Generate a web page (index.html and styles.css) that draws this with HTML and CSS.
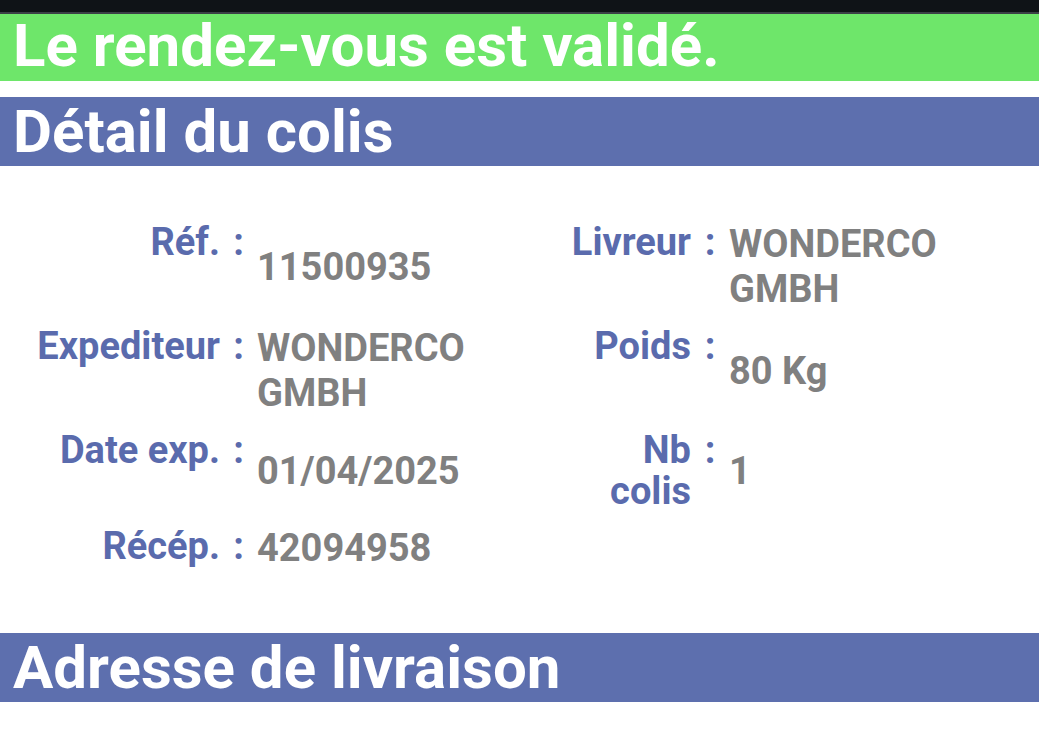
FILE: index.html
```html
<!DOCTYPE html>
<html lang="fr">
<head>
<meta charset="utf-8">
<title>Détail du colis</title>
<link rel="stylesheet" href="styles.css">
</head>
<body>
<div class="statusbar"></div>
<div class="banner">Le rendez-vous est validé.</div>
<div class="section-title">Détail du colis</div>
<div class="details">
  <div class="label">Réf.</div><div class="colon">:</div><div class="value">11500935</div>
  <div class="label">Livreur</div><div class="colon">:</div><div class="value">WONDERCO GMBH</div>

  <div class="label">Expediteur</div><div class="colon">:</div><div class="value">WONDERCO GMBH</div>
  <div class="label">Poids</div><div class="colon">:</div><div class="value">80 Kg</div>

  <div class="label">Date exp.</div><div class="colon">:</div><div class="value">01/04/2025</div>
  <div class="label">Nb colis</div><div class="colon">:</div><div class="value">1</div>

  <div class="label">Récép.</div><div class="colon">:</div><div class="value">42094958</div>
  <div class="empty"></div><div class="empty"></div><div class="empty"></div>
</div>
<div class="section-title">Adresse de livraison</div>
</body>
</html>
```

FILE: styles.css
```css
html, body {
  margin: 0;
  padding: 0;
  background: #ffffff;
}
body {
  width: 1039px;
  font-family: Roboto, "Liberation Sans", sans-serif;
  font-weight: 700;
}
.statusbar {
  height: 12px;
  background: #0f1317;
  border-bottom: 2px solid #3b4046;
}
.banner {
  height: 64px;
  padding: 0 0 3px 13px;
  line-height: 64px;
  font-size: 60px;
  color: #ffffff;
  background: #6ee66a;
  white-space: nowrap;
}
.section-title {
  margin-top: 16px;
  height: 69px;
  padding-left: 13px;
  line-height: 69px;
  font-size: 60px;
  color: #ffffff;
  background: #5d6fae;
  white-space: nowrap;
}
.details {
  display: grid;
  grid-template-columns: 220px 37px 303px 131px 38px 1fr;
  row-gap: 14px;
  padding: 56px 0 46px;
  font-size: 38px;
}
.label {
  align-self: start;
  text-align: right;
  line-height: 41px;
  color: #5a6bad;
}
.colon {
  align-self: start;
  text-align: center;
  line-height: 41px;
  color: #5a6bad;
}
.value {
  align-self: center;
  line-height: 45px;
  color: #808080;
}
```
